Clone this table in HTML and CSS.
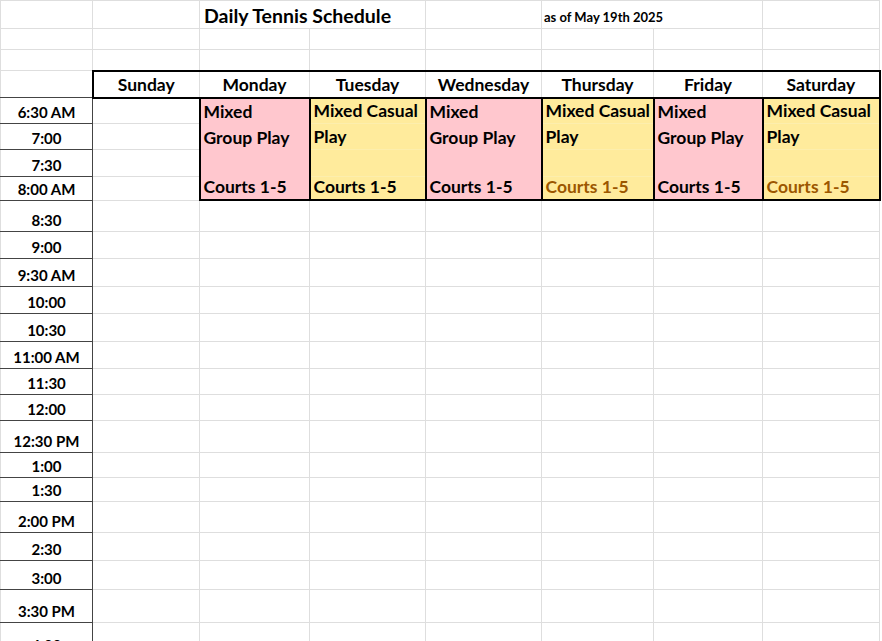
FILE: index.html
```html
<!DOCTYPE html>
<html>
<head>
<meta charset="utf-8">
<title>Daily Tennis Schedule</title>
<link rel="stylesheet" href="styles.css">
</head>
<body>
<table class="sheet">
  <colgroup>
    <col class="c-a"><col class="c-b"><col class="c-c"><col class="c-d"><col class="c-e"><col class="c-f"><col class="c-g"><col class="c-h">
  </colgroup>
  <tr class="h28"><td></td><td></td><td colspan="2" class="title">Daily Tennis Schedule</td><td></td><td colspan="2" class="asof">as of May 19th 2025</td><td></td></tr>
  <tr class="h21"><td></td><td></td><td></td><td></td><td></td><td></td><td></td><td></td></tr>
  <tr class="h21"><td></td><td></td><td></td><td></td><td></td><td></td><td></td><td></td></tr>
  <tr class="h27 head"><td class="corner"></td><td class="day first">Sunday</td><td class="day">Monday</td><td class="day">Tuesday</td><td class="day">Wednesday</td><td class="day">Thursday</td><td class="day">Friday</td><td class="day last">Saturday</td></tr>

  <tr class="h26"><td class="time">6:30 AM</td><td></td><td class="ev pk bt">Mixed</td><td class="ev yl bt">Mixed Casual</td><td class="ev pk bt">Mixed</td><td class="ev yl bt">Mixed Casual</td><td class="ev pk bt">Mixed</td><td class="ev yl bt">Mixed Casual</td></tr>
  <tr class="h26"><td class="time">7:00</td><td></td><td class="ev pk">Group Play</td><td class="ev yl">Play</td><td class="ev pk">Group Play</td><td class="ev yl">Play</td><td class="ev pk">Group Play</td><td class="ev yl">Play</td></tr>
  <tr class="h27"><td class="time">7:30</td><td></td><td class="ev pk"></td><td class="ev yl"></td><td class="ev pk"></td><td class="ev yl"></td><td class="ev pk"></td><td class="ev yl"></td></tr>
  <tr class="h23"><td class="time">8:00 AM</td><td></td><td class="ev pk bb">Courts 1-5</td><td class="ev yl bb">Courts 1-5</td><td class="ev pk bb">Courts 1-5</td><td class="ev yl bb brown">Courts 1-5</td><td class="ev pk bb">Courts 1-5</td><td class="ev yl bb brown">Courts 1-5</td></tr>

  <tr class="h31"><td class="time">8:30</td><td></td><td></td><td></td><td></td><td></td><td></td><td></td></tr>
  <tr class="h27"><td class="time">9:00</td><td></td><td></td><td></td><td></td><td></td><td></td><td></td></tr>
  <tr class="h28"><td class="time">9:30 AM</td><td></td><td></td><td></td><td></td><td></td><td></td><td></td></tr>
  <tr class="h27"><td class="time">10:00</td><td></td><td></td><td></td><td></td><td></td><td></td><td></td></tr>
  <tr class="h28"><td class="time">10:30</td><td></td><td></td><td></td><td></td><td></td><td></td><td></td></tr>
  <tr class="h27"><td class="time">11:00 AM</td><td></td><td></td><td></td><td></td><td></td><td></td><td></td></tr>
  <tr class="h26"><td class="time">11:30</td><td></td><td></td><td></td><td></td><td></td><td></td><td></td></tr>
  <tr class="h26"><td class="time">12:00</td><td></td><td></td><td></td><td></td><td></td><td></td><td></td></tr>
  <tr class="h32"><td class="time">12:30 PM</td><td></td><td></td><td></td><td></td><td></td><td></td><td></td></tr>
  <tr class="h25"><td class="time">1:00</td><td></td><td></td><td></td><td></td><td></td><td></td><td></td></tr>
  <tr class="h24"><td class="time">1:30</td><td></td><td></td><td></td><td></td><td></td><td></td><td></td></tr>
  <tr class="h31"><td class="time">2:00 PM</td><td></td><td></td><td></td><td></td><td></td><td></td><td></td></tr>
  <tr class="h28"><td class="time">2:30</td><td></td><td></td><td></td><td></td><td></td><td></td><td></td></tr>
  <tr class="h29"><td class="time">3:00</td><td></td><td></td><td></td><td></td><td></td><td></td><td></td></tr>
  <tr class="h33"><td class="time">3:30 PM</td><td></td><td></td><td></td><td></td><td></td><td></td><td></td></tr>
  <tr class="h34"><td class="time">4:00</td><td></td><td></td><td></td><td></td><td></td><td></td><td></td></tr>
</table>
</body>
</html>
```
FILE: styles.css
```css
html, body {
  margin: 0;
  padding: 0;
  background: #fff;
  overflow: hidden;
}

.sheet {
  border-collapse: collapse;
  table-layout: fixed;
  width: 879px;
  font-family: Lato, "Liberation Sans", sans-serif;
  font-weight: 700;
  color: #000;
}

.c-a { width: 92px; }
.c-b { width: 107px; }
.c-c { width: 110px; }
.c-d { width: 116px; }
.c-e { width: 116px; }
.c-f { width: 112px; }
.c-g { width: 109px; }
.c-h { width: 117px; }

.sheet td {
  box-sizing: border-box;
  border: 1px solid #dedede;
  padding: 0 3px 1px;
  vertical-align: bottom;
  white-space: nowrap;
  overflow: hidden;
  font-size: 17.5px;
  line-height: 20px;
}

.h21 > td { height: 21px; }
.h23 > td { height: 23px; }
.h24 > td { height: 24px; }
.h25 > td { height: 25px; }
.h26 > td { height: 26px; }
.h27 > td { height: 27px; }
.h28 > td { height: 28px; }
.h29 > td { height: 29px; }
.h31 > td { height: 31px; }
.h32 > td { height: 32px; }
.h33 > td { height: 33px; }
.h34 > td { height: 34px; }

.sheet td.title {
  font-size: 19.5px;
  line-height: 22px;
  padding-left: 4px;
  padding-bottom: 1px;
}

.sheet td.asof {
  font-size: 13px;
  padding-left: 2px;
  padding-bottom: 2px;
  line-height: 18px;
}

.sheet td.day {
  text-align: center;
  padding-bottom: 2px;
  border-top: 2px solid #000;
  border-bottom: 2px solid #000;
}
.sheet td.day.first { border-left: 2px solid #000; }
.sheet td.day.last { border-right: 2px solid #000; }

.sheet td.corner { border-bottom: 1px solid #444; }

.sheet td.time {
  text-align: center;
  font-size: 15px;
  line-height: 18px;
  padding-bottom: 2px;
  border-right: 1px solid #444;
  border-bottom: 1px solid #444;
}

.sheet td.ev {
  border-left: 2px solid #000;
  border-right: 2px solid #000;
  padding-left: 3px;
  padding-right: 0;
  padding-bottom: 2px;
}
.sheet td.pk {
  background: #ffc7ce;
  border-top: none;
  border-bottom: none;
}
.sheet td.yl {
  background: #ffeb9c;
  border-top: 1px solid #fdeead;
  border-bottom: 1px solid #fdeead;
}
.sheet td.ev.bt { border-top: 2px solid #000; }
.sheet td.ev.bb { border-bottom: 2px solid #000; }
.sheet td.brown { color: #9c5700; }
```
